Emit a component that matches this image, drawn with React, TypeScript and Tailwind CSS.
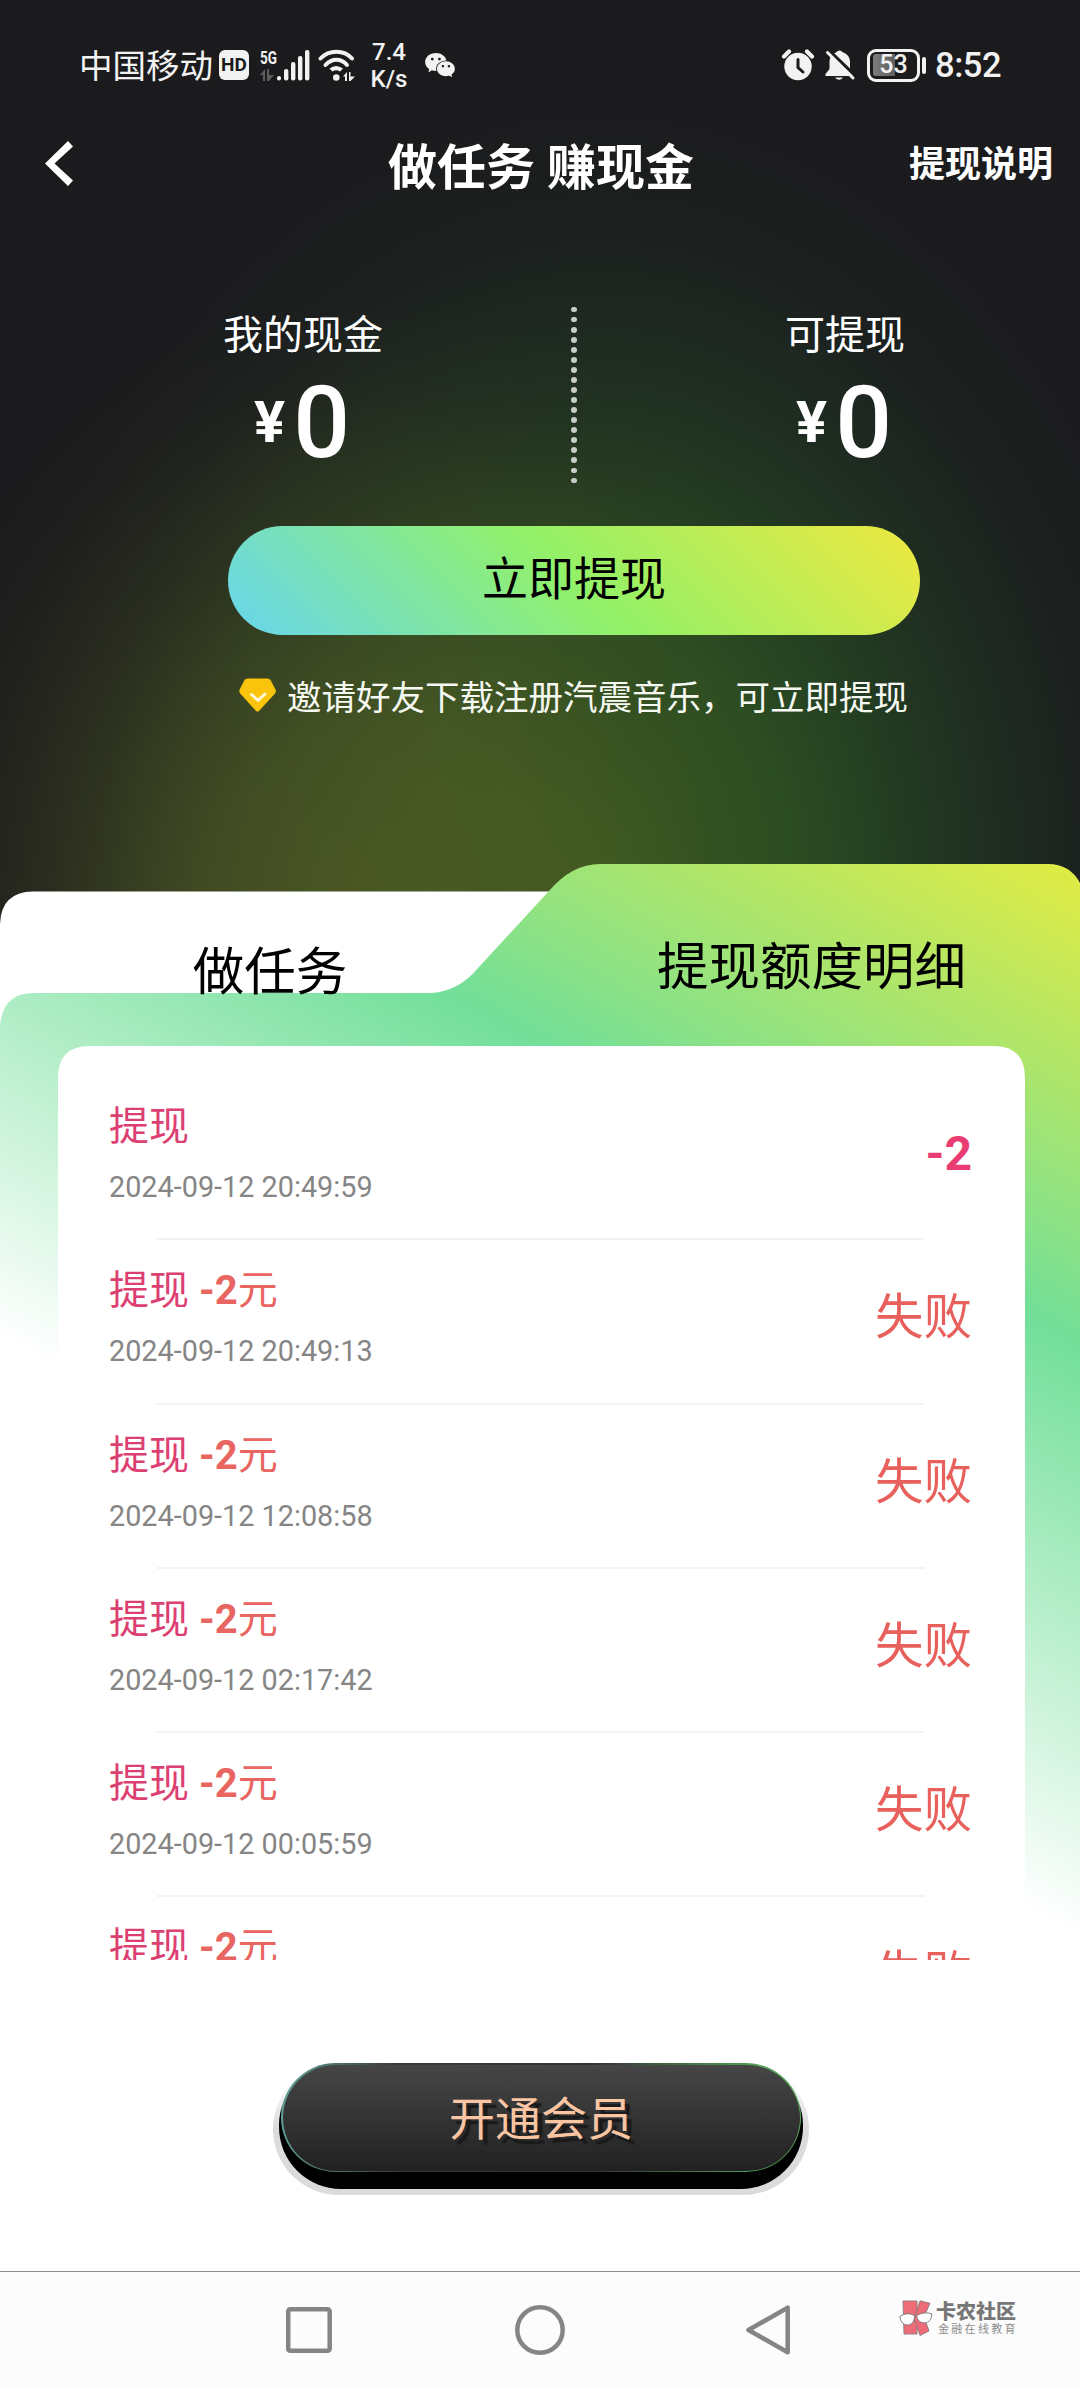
import React from 'react';
import { AiFillWechat } from 'react-icons/ai';

interface WithdrawRecord {
  id: number;
  amount?: string;
  time: string;
  result: string;
  failed: boolean;
}

const records: WithdrawRecord[] = [
  { id: 1, time: '2024-09-12 20:49:59', result: '-2', failed: false },
  { id: 2, amount: '-2', time: '2024-09-12 20:49:13', result: '失败', failed: true },
  { id: 3, amount: '-2', time: '2024-09-12 12:08:58', result: '失败', failed: true },
  { id: 4, amount: '-2', time: '2024-09-12 02:17:42', result: '失败', failed: true },
  { id: 5, amount: '-2', time: '2024-09-12 00:05:59', result: '失败', failed: true },
  { id: 6, amount: '-2', time: '', result: '失败', failed: true },
];

const SignalIcon = () => (
  <svg className="w-[50px] h-[34px] shrink-0" viewBox="0 0 50 34">
    <text x="0" y="15.500" fontSize="18" fontWeight="700" textLength="17" lengthAdjust="spacingAndGlyphs" fill="#f2f2f2">5G</text>
    <path d="M0 27l5-6v12H3v-6zM7 21h2v6h5l-5 6H7z" fill="#5c5c5e" />
    <g fill="#f2f2f2">
      <rect x="17" y="28" width="4" height="4.5" rx="2" />
      <rect x="24" y="21" width="4.4" height="11.5" rx="2" />
      <rect x="31" y="14" width="4.4" height="18.5" rx="2" />
      <rect x="38" y="8" width="4.4" height="24.5" rx="2" />
      <rect x="45" y="2" width="4.4" height="30.5" rx="2" />
    </g>
  </svg>
);

const WifiIcon = () => (
  <svg className="w-[38px] h-[34px] shrink-0" viewBox="0 0 38 34">
    <g fill="none" stroke="#f2f2f2" strokeWidth="4" strokeLinecap="round">
      <path d="M2.500 10.500C11 1.500 26 1.500 34 10.500" />
      <path d="M7.500 17C14 10 23 10 29 17" />
    </g>
    <path d="M11.500 20.500Q18 15.500 25 20.500L22 23.500Q18 21 14.500 23.500z" fill="#f2f2f2" />
    <circle cx="18.300" cy="29.500" r="3.300" fill="#f2f2f2" />
    <path d="M25 28.500l4-4.500v9h-2v-4.500zM31 24h1.500v4.500h4.500l-4.500 4.500H31z" fill="#f2f2f2" />
  </svg>
);

const AlarmIcon = () => (
  <svg className="w-[34px] h-[32px] shrink-0" viewBox="0 0 34 32">
    <circle cx="17" cy="17.500" r="13.700" fill="#f2f2f2" />
    <path d="M3 7.500L8 2.500M26 2.500L31 7.500" stroke="#f2f2f2" strokeWidth="4.200" strokeLinecap="round" />
    <path d="M17 10.500v8l5 4.500" fill="none" stroke="#1b1b1d" strokeWidth="3" strokeLinecap="round" />
  </svg>
);

const MuteIcon = () => (
  <svg className="w-[30px] h-[32px] shrink-0" viewBox="0 0 30 32">
    <path d="M0.500 27v-2l4-5v-7C4.500 7.500 8 4.500 11 3.600Q14.500-.8 18 3.600C22 4.800 25 8 25 13v6.500l2.500 4V27z" fill="#f2f2f2" />
    <path d="M10 28.500h8Q14 33 10 28.500z" fill="#f2f2f2" />
    <path d="M5 2.500L30.500 27" stroke="#1b1b1d" strokeWidth="3.200" />
    <path d="M2.500 3.500L28 29" stroke="#f2f2f2" strokeWidth="3" strokeLinecap="round" />
  </svg>
);

const StatusBar = () => (
  <div className="h-[120px] pl-[79px] pr-[78px] pt-[10px] flex items-center justify-between text-[#f2f2f2]">
    <div className="flex items-center">
      <span className="mt-[3px] text-[33.500px] leading-10 w-[134px] whitespace-nowrap">中国移动</span>
      <span className="ml-[6px] w-[30px] h-[30px] rounded-md bg-[#f2f2f2] text-[#1b1b1d] flex items-center justify-center text-[19px] leading-[30px] font-bold">HD</span>
      <div className="ml-[11px] flex items-center"><SignalIcon /></div>
      <div className="ml-[8px] flex items-center"><WifiIcon /></div>
      <div className="ml-[13px] mt-[2px] w-[40px] text-center text-[24px] leading-[27px] font-medium">
        <div>7.4</div>
        <div>K/s</div>
      </div>
      <AiFillWechat className="ml-[14px] w-[34px] h-[34px]" />
    </div>
    <div className="flex items-center">
      <AlarmIcon />
      <div className="ml-[10px] flex"><MuteIcon /></div>
      <div className="ml-[12px] w-[53px] h-[33px] border-[3px] border-[#f2f2f2] rounded-[9px] p-[2.500px]">
        <div className="h-full rounded-[3px] flex items-center justify-center text-[25px] leading-[22px] font-medium bg-[linear-gradient(90deg,#7c7c7c_0%,#5f5f5f_53%,transparent_53%)]">53</div>
      </div>
      <div className="ml-[2px] w-[4px] h-[17px] rounded-full bg-[#f2f2f2]" />
      <span className="ml-[9px] mr-px text-[34.500px] leading-10 font-medium tracking-[-0.500px]">8:52</span>
    </div>
  </div>
);

const Amount = ({ label, value }: { label: string; value: string }) => (
  <div className="w-40 flex flex-col items-center text-white">
    <div className="mt-[2px] text-[40px] leading-10 whitespace-nowrap">{label}</div>
    <div className="mt-[17px] -ml-[2px] h-[100px] flex items-end">
      <span className="mb-[22px] text-[58px] leading-[57px] font-bold">¥</span>
      <span className="ml-[8px] text-[100px] leading-[100px] font-medium">{value}</span>
    </div>
  </div>
);

const Hero = () => (
  <section className="h-[654px] pt-[96px] pl-[223px] pr-[155px]">
    <div className="h-[220px] flex justify-between">
      <div className="pt-2"><Amount label="我的现金" value="0" /></div>
      <div className="flex flex-col gap-[4.600px] pt-px">
        {Array.from({ length: 18 }, (_, i) => (
          <span key={i} className="block w-[5.500px] h-[5.450px] shrink-0 rounded-full bg-[#c9cfc8]" />
        ))}
      </div>
      <div className="pt-2"><Amount label="可提现" value="0" /></div>
    </div>
    <button className="mx-[5px] w-[692px] h-[109px] rounded-full bg-[linear-gradient(45deg,#6bd8e4_4%,#92f168_50%,#eae842_97%)] text-black text-[46px] leading-[109px] flex justify-center">
      <span className="-mt-px">立即提现</span>
    </button>
    <div className="mt-[36px] ml-[16px] flex items-center">
      <svg className="w-[37px] h-[34px]" viewBox="0 0 37 34">
        <path d="M8.500 0.500h20q2 0 3 1.500l5 9.500q1 2-.5 4L20 33q-1.500 1-3 0L1.200 15.500q-1.500-2-.5-4L5.500 2q1-1.500 3-1.500z" fill="#fbc40c" />
        <path d="M12.500 16.500l6.500 6 7-6.500" fill="none" stroke="#fff8d8" strokeWidth="3" strokeLinecap="round" strokeLinejoin="round" />
      </svg>
      <span className="ml-[11px] mt-[7px] text-[34.500px] leading-10 text-[#f6f8f2] whitespace-nowrap">邀请好友下载注册汽震音乐，可立即提现</span>
    </div>
  </section>
);

// Folder shaped backdrop: white tab on the left, raised active tab on the right
const FolderShape = () => (
  <svg className="absolute left-0 top-0 w-[1080px] h-[1096px]" viewBox="0 864 1080 1096">
    <defs>
      <linearGradient id="folder" gradientUnits="userSpaceOnUse" x1="624" y1="1684" x2="1080" y2="864">
        <stop offset="0" stopColor="#ffffff" />
        <stop offset="0.553" stopColor="#72df99" />
        <stop offset="1" stopColor="#e2eb42" />
      </linearGradient>
    </defs>
    <path d="M0 1960V924Q1 892 33 891.500H700V1960z" fill="#fff" />
    <path d="M0 1960V1027Q2 993 34 993H430Q458 992 478 968L549 891Q572 864 600 864H1048Q1070 864 1080 883V1960z" fill="url(#folder)" />
    <path d="M58 1960V1078Q58 1046 90 1046H993Q1025 1046 1025 1078V1960z" fill="#fff" />
  </svg>
);

const RecordRow = ({ record }: { record: WithdrawRecord }) => (
  <li className="h-[164.250px] shrink-0 flex flex-col">
    <div className="flex-1 flex justify-between">
      <div className="pt-[31px]">
        <div className="text-[40px] leading-10 text-[#dc3f72] whitespace-nowrap">
          提现
          {record.amount && (
            <span className="text-[#e96561]"> <b className="font-bold">{record.amount}</b>元</span>
          )}
        </div>
        <div className="mt-[25px] text-[28.800px] leading-[30px] text-[#858585]">{record.time}</div>
      </div>
      {record.failed ? (
        <div className="pt-[53px] text-[48.500px] leading-[50px] text-[#e8605c]">{record.result}</div>
      ) : (
        <div className="pt-[53px] text-[48px] leading-[50px] font-bold text-[#e83c72]">{record.result}</div>
      )}
    </div>
    <div className="mx-[48px] h-[2px] bg-[#f3f3f3]" />
  </li>
);

const RecordPanel = () => (
  <section className="relative h-[1096px]">
    <FolderShape />
    <div className="relative h-full flex flex-col">
      <div className="h-[182px] grid grid-cols-2 text-black text-[51.500px] leading-[60px] text-center">
        <div className="pt-[79px]">做任务</div>
        <div className="pt-[74px] pl-[3px]">提现额度明细</div>
      </div>
      <ul className="mt-[30px] flex-1 min-h-0 overflow-hidden pl-[109px] pr-[108px] flex flex-col">
        {records.map((record) => (
          <RecordRow key={record.id} record={record} />
        ))}
      </ul>
    </div>
  </section>
);

const MemberBar = () => (
  <section className="h-[311px] pt-[103px] flex justify-center bg-white">
    <div className="w-[536px] h-[132px] ml-[2px] px-[6px] pb-[6px] rounded-[66px] bg-[linear-gradient(#ffffff_10%,#dcdadc_50%)]">
      <div className="h-[126px] px-[2px] rounded-[62px] bg-[linear-gradient(transparent_20%,#000_40%)]">
        <button className="w-full h-[109px] p-[1.500px] rounded-full bg-[linear-gradient(90deg,#5f9f95_0%,#3a3a3a_22%,#333_60%,#4f9a52_90%,#5fae62_100%)]">
          <span className="h-full pt-[3px] rounded-full flex items-center justify-center bg-[linear-gradient(#464646,#212121)] text-[46px] text-[#f9c5a3] [text-shadow:5px_5px_1px_#1a1a1a]">开通会员</span>
        </button>
      </div>
    </div>
  </section>
);

const NavBar = () => (
  <nav className="h-[117px] border-t border-[#8c8c86] bg-[#fcfcfc] flex pl-[284px] pt-[31px]">
    <svg className="w-[50px] h-[54px]" viewBox="0 0 50 54" fill="none" stroke="#858585" strokeWidth="4.500">
      <rect x="4.200" y="6.200" width="41.500" height="41.500" rx="2" />
    </svg>
    <svg className="ml-[179px] w-[54px] h-[54px]" viewBox="0 0 54 54" fill="none" stroke="#858585" strokeWidth="4.500">
      <circle cx="27" cy="27" r="22.700" />
    </svg>
    <svg className="ml-[177px] w-[50px] h-[54px]" viewBox="0 0 50 54" fill="none" stroke="#858585" strokeWidth="4.500" strokeLinejoin="round">
      <path d="M43.700 4.700v44.600L4.500 27z" />
    </svg>
    <div className="ml-[105px] -mt-[3px] flex">
      <svg className="w-[34px] h-[36px]" viewBox="0 0 34 36">
        <g fill="#ee6c78" stroke="#8a7a7c" strokeWidth="0.900">
          <path d="M4 1h14v33H5z" />
          <path d="M21 .8l10 2.500L25 17l5 14-9 4.500L15 19z" />
        </g>
        <g fill="#fff" stroke="#777" strokeWidth="0.900">
          <path d="M.8 16.500Q8 11.500 15.500 15.500 15.500 24 9.500 25 2 25.500.8 16.500z" />
          <path d="M17.500 15.500Q26 11 33 14 32 22.500 26 23 18.500 23 17.500 15.500z" />
        </g>
      </svg>
      <div className="ml-[3px] mt-[2px] text-[#777]">
        <div className="text-[20px] leading-[21px] font-black">卡农社区</div>
        <div className="ml-[2px] mt-px text-[11px] leading-[12px] tracking-[2.300px] text-[#8c8c8c]">金融在线教育</div>
      </div>
    </div>
  </nav>
);

const App: React.FC = () => (
  <div className="w-[1080px] h-[2388px] overflow-hidden bg-white font-['Roboto','Noto_Sans_CJK_SC',sans-serif]">
    <div className="h-[950px] -mb-[86px] bg-[#1b1b1d] bg-[radial-gradient(ellipse_500px_640px_at_370px_940px,rgba(88,94,36,0.75)_0%,rgba(84,92,36,0.62)_35%,rgba(72,78,32,0.32)_65%,rgba(60,62,30,0.1)_87%,transparent_100%),radial-gradient(ellipse_600px_780px_at_600px_880px,rgba(50,98,32,0.9)_0%,rgba(46,94,36,0.76)_32%,rgba(38,80,40,0.4)_62%,rgba(34,60,42,0.14)_84%,transparent_100%)]">
      <StatusBar />
      <header className="h-[90px] pl-[44px] pr-[27px] pt-[3px] grid grid-cols-[1fr_auto_1fr] text-white">
        <svg className="mt-[17px] w-[30px] h-[47px]" viewBox="0 0 30 47">
          <path d="M24 1l5 5.500L10.500 23.500 29 40.500 24 46 1 23.500z" fill="#fff" />
        </svg>
        <h1 className="pr-[15px] text-[49px] leading-[92px] font-bold whitespace-nowrap">做任务 赚现金</h1>
        <span className="justify-self-end text-[36px] leading-[84px] font-bold">提现说明</span>
      </header>
      <Hero />
    </div>
    <RecordPanel />
    <MemberBar />
    <NavBar />
  </div>
);

export default App;
